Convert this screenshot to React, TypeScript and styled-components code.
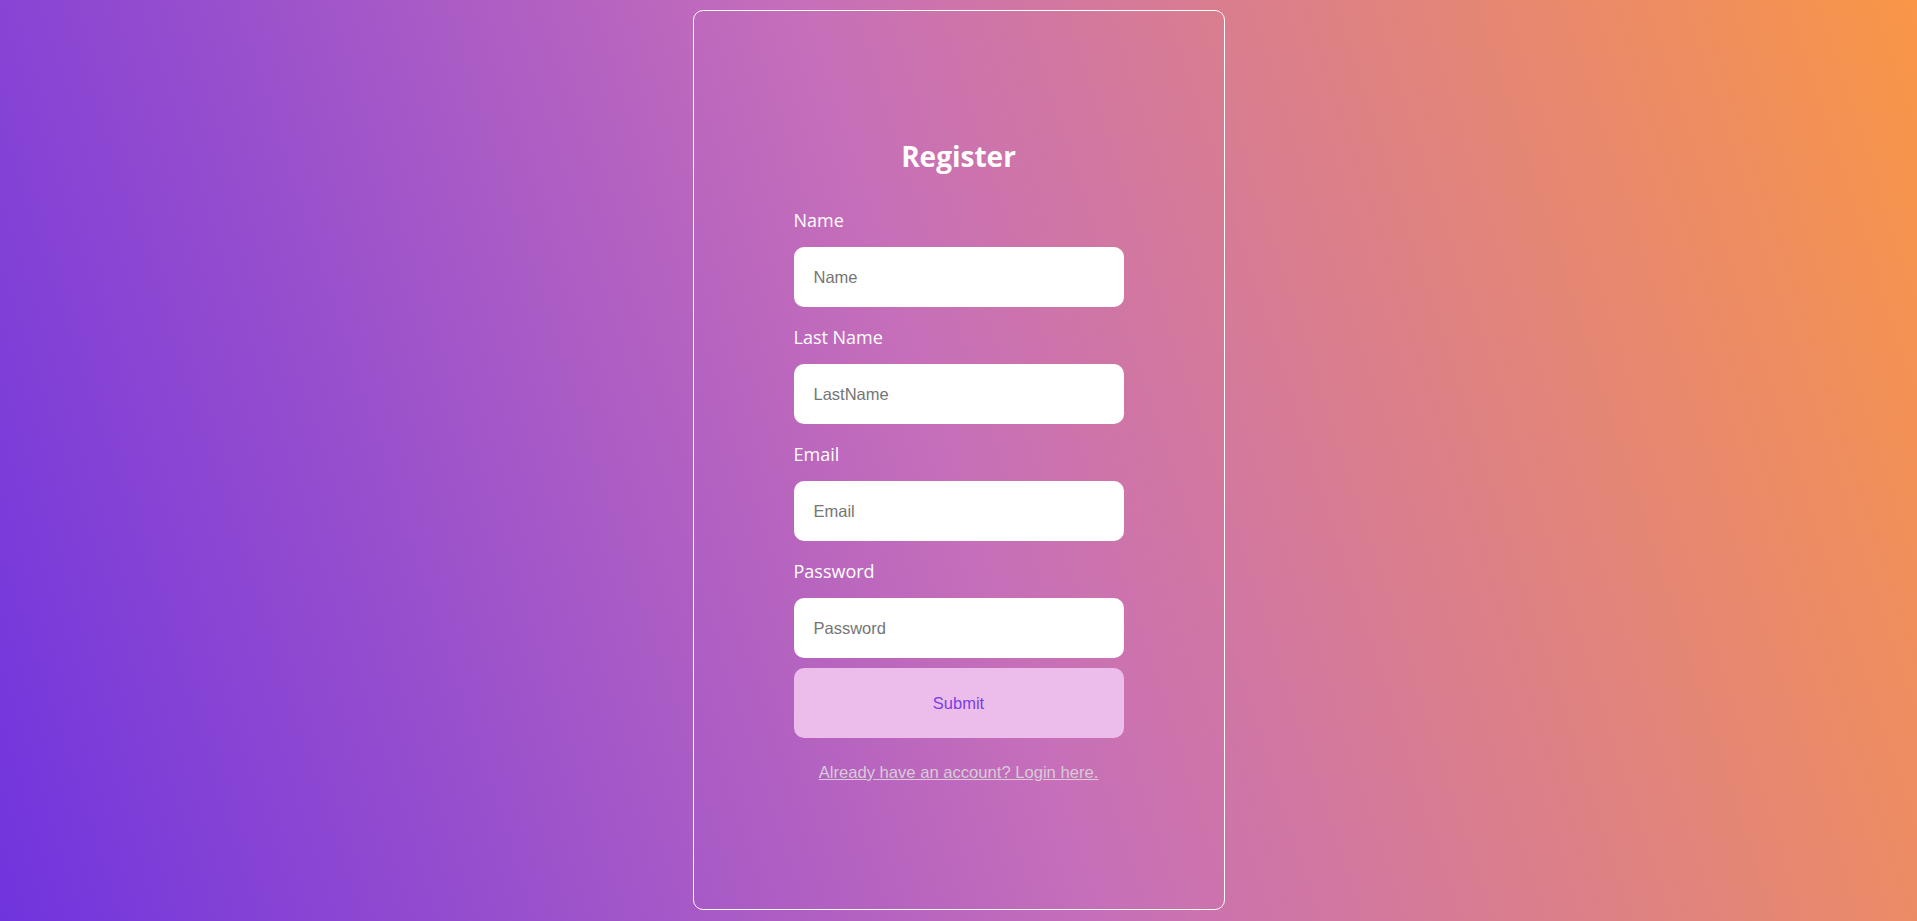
import React from "react";
import styled, { createGlobalStyle } from "styled-components";

const GlobalStyle = createGlobalStyle`
  html, body {
    margin: 0;
    padding: 0;
  }
  body {
    min-height: 100vh;
    background: linear-gradient(72deg, #7034de 0%, #c76fb9 50%, #f99647 100%);
    font-family: "Liberation Sans", Arial, sans-serif;
  }
  * {
    box-sizing: border-box;
  }
`;

const Page = styled.main`
  height: 100vh;
  display: flex;
  justify-content: center;
  align-items: flex-start;
  padding-top: 10px;
`;

const Card = styled.section`
  width: 532px;
  height: 900px;
  padding-bottom: 1px;
  border: 1px solid #ffffff;
  border-radius: 10px;
  display: flex;
  flex-direction: column;
  align-items: center;
  justify-content: center;
`;

const Title = styled.h1`
  margin: 0 0 33px;
  font-family: "Open Sans", "Noto Sans", sans-serif;
  font-size: 28px;
  font-weight: 700;
  line-height: 38px;
  color: #ffffff;
`;

const Form = styled.form`
  width: 330px;
  display: flex;
  flex-direction: column;
  gap: 18px;
`;

const Field = styled.div`
  display: flex;
  flex-direction: column;
  gap: 15px;
`;

const Label = styled.label`
  font-family: "Open Sans", "Noto Sans", sans-serif;
  font-size: 18px;
  line-height: 24px;
  color: #ffffff;
`;

const Input = styled.input`
  height: 60px;
  width: 100%;
  padding: 0 20px;
  border: none;
  border-radius: 10px;
  background: #ffffff;
  font-family: "Liberation Sans", Arial, sans-serif;
  font-size: 16.5px;
  color: #333333;
  outline: none;

  &::placeholder {
    color: #757575;
  }
`;

const SubmitButton = styled.button`
  margin-top: -8px;
  height: 70px;
  width: 100%;
  border: none;
  border-radius: 10px;
  background: #ecbcea;
  color: #7b3fe3;
  font-family: "Liberation Sans", Arial, sans-serif;
  font-size: 16.5px;
  cursor: pointer;
`;

const LoginLink = styled.a`
  margin-top: 26px;
  font-family: "Liberation Sans", Arial, sans-serif;
  font-size: 16.6px;
  line-height: 18px;
  color: #d8cbd8;
  text-decoration: underline;
`;

const fields = [
  { id: "name", label: "Name", placeholder: "Name", type: "text" },
  { id: "lastname", label: "Last Name", placeholder: "LastName", type: "text" },
  { id: "email", label: "Email", placeholder: "Email", type: "email" },
  { id: "password", label: "Password", placeholder: "Password", type: "password" },
];

export default function App() {
  return (
    <>
      <GlobalStyle />
      <Page>
        <Card>
          <Title>Register</Title>
          <Form onSubmit={(e) => e.preventDefault()}>
            {fields.map((f) => (
              <Field key={f.id}>
                <Label htmlFor={f.id}>{f.label}</Label>
                <Input id={f.id} type={f.type} placeholder={f.placeholder} />
              </Field>
            ))}
            <SubmitButton type="submit">Submit</SubmitButton>
          </Form>
          <LoginLink href="#">Already have an account? Login here.</LoginLink>
        </Card>
      </Page>
    </>
  );
}
